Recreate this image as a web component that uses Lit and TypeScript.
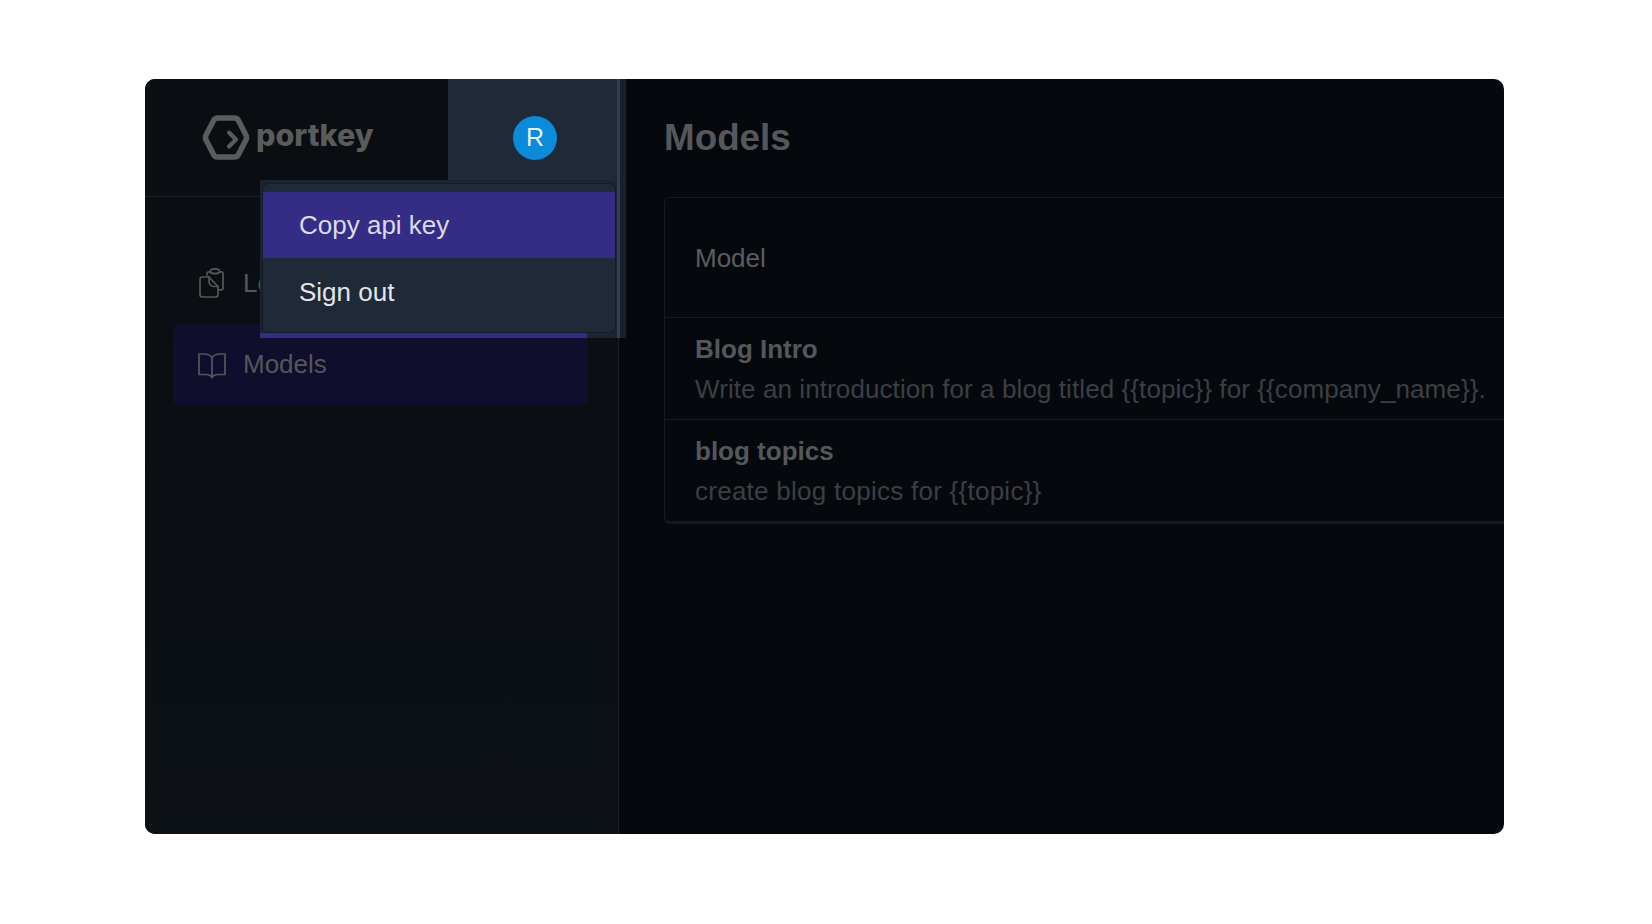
import { LitElement, css, html, svg } from "lit";
import { customElement } from "lit/decorators.js";

const clipboardIcon = svg`<g fill="none" stroke="currentColor" stroke-width="1.7" stroke-linejoin="round" stroke-linecap="round">
  <path d="M10 7V5.500c0-1 .8-1.700 1.700-1.700H13c.4-2 2-3 5-3s4.600 1 5 3h1.300c1 0 1.700.8 1.700 1.700V20c0 1-.7 1.800-1.700 1.800H21"/>
  <path d="M13 3.800c.8 1.300 2.600 1.900 5 1.900s4.200-.6 5-1.900"/>
  <path d="M3 11.500C3 10.100 4 9 5.400 9H12l9 9.500v8c0 1.400-1 2.500-2.400 2.500H5.400C4 29 3 27.900 3 26.500z"/>
  <path d="M12 9v4.500c0 2.700 2.200 5 5 5h4"/>
</g>`;

const bookIcon = svg`<g fill="none" stroke="currentColor" stroke-width="1.7" stroke-linejoin="round" stroke-linecap="round">
  <path d="M15 7.500C13 4.800 10 4 7 4H2v20.500h7.500c2.500 0 4.300.8 5.500 3 1.200-2.200 3-3 5.500-3H28V4h-5c-3 0-6 .8-8 3.500z"/>
  <path d="M15 7.500v20"/>
</g>`;

@customElement("app-root")
export class AppRoot extends LitElement {
    render() {
        return html`
            <div class="frame">
                <aside class="sidebar">
                    <div class="top">
                        <div class="logo">
                            <svg width="48" height="48" viewBox="0 0 48 48">
                                <path class="hex" d="M15.500 4h17c1.600 0 3 .8 3.800 2.200l7.500 14.600c.9 1.700.9 3.700 0 5.400l-7.500 14.600c-.8 1.400-2.200 2.200-3.800 2.200h-17c-1.600 0-3-.8-3.800-2.200L4.200 26.200c-.9-1.700-.9-3.700 0-5.400l7.500-14.600C12.500 4.800 13.900 4 15.500 4z"/>
                                <path class="chevron" d="M27 18.500l7 7-7 7"/>
                            </svg>
                            <span class="wordmark">portkey</span>
                        </div>
                        <div class="account"><span class="avatar">R</span></div>
                    </div>
                    <nav class="nav">
                        <a class="nav-item">
                            <svg width="30" height="30" viewBox="0 0 30 30">${clipboardIcon}</svg>
                            <span>Logs</span>
                        </a>
                        <a class="nav-item active">
                            <svg width="30" height="30" viewBox="0 0 30 30">${bookIcon}</svg>
                            <span>Models</span>
                        </a>
                    </nav>
                </aside>
                <main class="main">
                    <h1>Models</h1>
                    <div class="table">
                        <div class="head">Model</div>
                        <div class="row">
                            <strong>Blog Intro</strong>
                            <span>Write an introduction for a blog titled {{topic}} for {{company_name}}.</span>
                        </div>
                        <div class="row">
                            <strong>blog topics</strong>
                            <span class="wide">create blog topics for {{topic}}</span>
                        </div>
                    </div>
                </main>
                <div class="menu-wrap">
                    <div class="menu">
                        <div class="menu-item hover">Copy api key</div>
                        <div class="menu-item">Sign out</div>
                    </div>
                    <div class="menu-edge"></div>
                </div>
            </div>
        `;
    }

    static styles = css`
        :host {
            display: block;
            height: 924px;
            padding: 79px 148px 90px 145px;
            box-sizing: border-box;
            background: #fff;
            font-family: "Liberation Sans", Arial, sans-serif;
        }

        .frame {
            position: relative;
            display: flex;
            height: 100%;
            border-radius: 10px;
            overflow: hidden;
            background: #05090e;
        }

        .sidebar {
            flex: none;
            width: 473px;
            background: linear-gradient(#0a0d11, #0c1115);
            border-right: 1px solid #1b2127;
        }

        .top {
            display: flex;
            height: 117px;
            border-bottom: 1px solid #1a1f24;
        }

        .logo {
            flex: 1;
            display: flex;
            align-items: center;
            gap: 6px;
            padding-left: 57px;
            color: #5b5b5b;
        }

        .hex,
        .chevron {
            fill: none;
            stroke: #5b5b5b;
            stroke-linecap: round;
            stroke-linejoin: round;
        }

        .hex {
            stroke-width: 5.5;
        }

        .chevron {
            stroke-width: 4;
        }

        .wordmark {
            font-family: Inter, sans-serif;
            font-weight: 800;
            font-size: 30.5px;
            margin-top: -6px;
        }

        .account {
            flex: none;
            width: 178px;
            margin-right: -8px;
            display: flex;
            justify-content: center;
            align-items: center;
            padding-left: 2px;
            background: #1f2937;
            border-right: 6px solid #18202e;
            box-shadow: inset -3px 0 0 #343d4d;
            box-sizing: border-box;
        }

        .avatar {
            width: 44px;
            height: 44px;
            border-radius: 50%;
            background: #0b8bd9;
            color: #e6f3fb;
            font-size: 25px;
            display: flex;
            align-items: center;
            justify-content: center;
        }

        .nav {
            display: flex;
            flex-direction: column;
            padding: 45px 30px 0 28px;
        }

        .nav-item {
            display: flex;
            align-items: center;
            gap: 16px;
            height: 82px;
            padding-left: 24px;
            border-radius: 5px;
            color: #565659;
            font-size: 26px;
        }

        .nav-item.active {
            height: 81px;
            background: #0f0e2d;
        }

        .main {
            flex: 1;
            min-width: 0;
            padding-left: 45px;
            overflow: hidden;
        }

        h1 {
            margin: 0;
            height: 117px;
            display: flex;
            align-items: center;
            font-size: 36.8px;
            font-weight: 700;
            color: #55575a;
        }

        .table {
            width: 1000px;
            margin-top: 1px;
            border: 1px solid #171b20;
            border-bottom: 3px solid #15181d;
            border-radius: 6px;
        }

        .head {
            height: 117px;
            padding-top: 2px;
            display: flex;
            align-items: center;
            padding-left: 30px;
            font-size: 26px;
            color: #5b5d60;
            border-bottom: 1px solid #171b20;
        }

        .row {
            height: 100px;
            padding: 1px 0 0 30px;
            display: flex;
            flex-direction: column;
            justify-content: center;
            gap: 10px;
            font-size: 26px;
            line-height: 30px;
        }

        .row + .row {
            border-top: 1px solid #171b20;
        }

        .row strong {
            color: #55575a;
        }

        .row span {
            color: #3c3f44;
            white-space: nowrap;
            letter-spacing: 0.09px;
        }

        .row span.wide {
            letter-spacing: 0.26px;
        }

        .menu-wrap {
            position: absolute;
            left: 115px;
            top: 101px;
            width: 366px;
            height: 158px;
            box-sizing: border-box;
            padding: 3px 4px 0 2px;
            background: #1c2431;
            border-right: 6px solid #18202e;
            box-shadow: inset -3px 0 0 #343d4d;
        }

        .menu {
            height: 150px;
            box-sizing: border-box;
            padding-top: 8px;
            background: #1f2937;
            border: 1px solid #141b26;
            border-radius: 6px;
            overflow: hidden;
        }

        .menu-edge {
            height: 5px;
            width: 327px;
            margin-left: -2px;
            background: #352c85;
        }

        .menu-item {
            height: 68px;
            display: flex;
            align-items: center;
            padding-left: 36px;
            font-size: 26px;
            color: #e2e4e8;
        }

        .menu-item.hover {
            height: 66px;
            background: #352c85;
            color: #d9dbe8;
        }
    `;
}
